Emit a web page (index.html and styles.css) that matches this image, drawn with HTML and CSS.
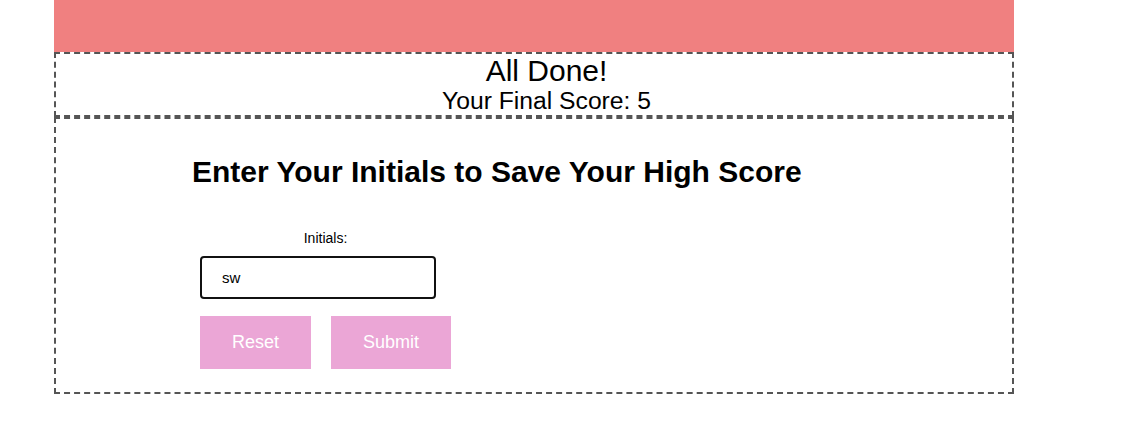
FILE: index.html
```html
<!DOCTYPE html>
<html lang="en">
<head>
<meta charset="utf-8">
<title>Quiz - All Done</title>
<link rel="stylesheet" href="styles.css">
</head>
<body>
<div class="page">
  <header class="topbar"></header>
  <section class="result">
    <h1 class="result-title">All Done!</h1>
    <p class="result-score">Your Final Score: 5</p>
  </section>
  <section class="save">
    <h2 class="save-title">Enter Your Initials to Save Your High Score</h2>
    <form class="save-form">
      <label class="save-label" for="initials">Initials:</label>
      <input class="save-input" id="initials" type="text" value="sw">
      <div class="save-actions">
        <button type="reset" class="btn">Reset</button>
        <button type="button" class="btn">Submit</button>
      </div>
    </form>
  </section>
</div>
</body>
</html>
```

FILE: styles.css
```css
* {
  box-sizing: border-box;
}

body {
  margin: 0;
  font-family: "Liberation Sans", Arial, sans-serif;
  color: #000;
  background: #fff;
}

.page {
  width: 960px;
  margin-left: 54px;
}

.topbar {
  height: 52px;
  background: #f08080;
}

.result {
  border: 2px dashed #555;
  padding-left: 25px;
  text-align: center;
}

.result-title {
  margin: 0;
  font-size: 30px;
  font-weight: normal;
  line-height: 33px;
}

.result-score {
  margin: 0;
  font-size: 24.7px;
  line-height: 28px;
}

.save {
  border: 2px dashed #555;
  padding: 35px 0 23px 136px;
}

.save-title {
  margin: 0;
  font-size: 30px;
  font-weight: bold;
  line-height: 35px;
}

.save-form {
  display: inline-flex;
  flex-direction: column;
  margin: 41px 0 0 8px;
}

.save-label {
  display: block;
  text-align: center;
  font-size: 14px;
  line-height: 16px;
}

.save-input {
  width: 236px;
  height: 43px;
  margin-top: 10px;
  padding: 0 20px;
  border: 2px solid #111;
  border-radius: 4px;
  font-family: "Liberation Sans", Arial, sans-serif;
  font-size: 15px;
  color: #000;
  outline: none;
}

.save-actions {
  display: flex;
  gap: 20px;
  margin-top: 17px;
}

.btn {
  padding: 16px 32px;
  border: none;
  background: #eba6d6;
  color: #fff;
  font-family: "Liberation Sans", Arial, sans-serif;
  font-size: 18px;
  line-height: 21px;
  cursor: pointer;
}
```
